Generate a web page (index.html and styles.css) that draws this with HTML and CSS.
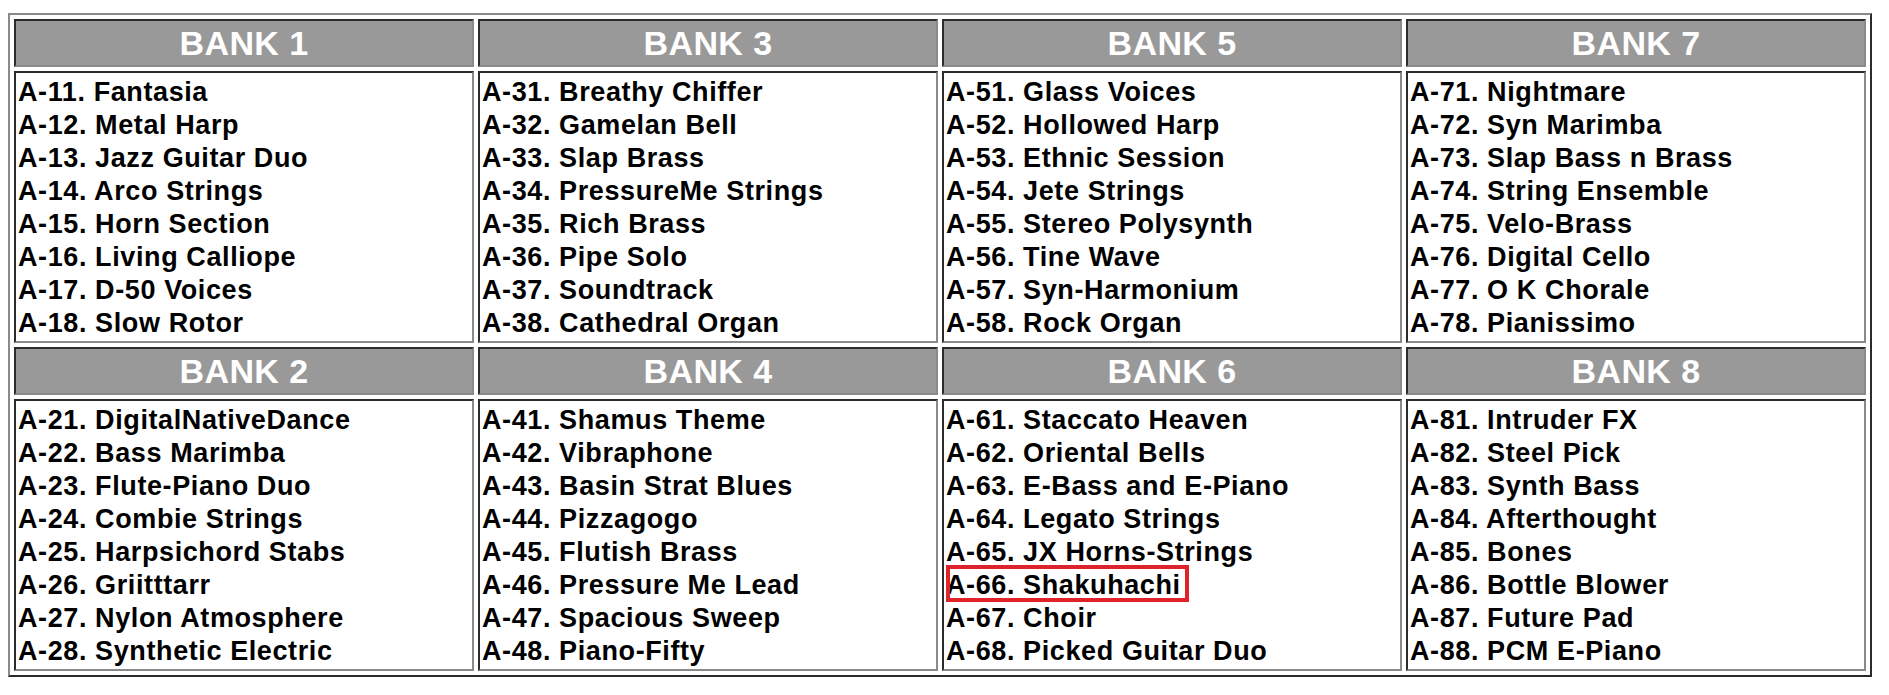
FILE: index.html
```html
<!DOCTYPE html>
<html>
<head>
<meta charset="utf-8">
<link rel="stylesheet" href="styles.css">
</head>
<body>
<table class="banks">
  <colgroup><col class="c"><col class="c"><col class="c"><col class="c"></colgroup>
  <tr class="head">
    <th>BANK 1</th><th>BANK 3</th><th>BANK 5</th><th>BANK 7</th>
  </tr>
  <tr class="list">
    <td>A-11. Fantasia<br>A-12. Metal Harp<br>A-13. Jazz Guitar Duo<br>A-14. Arco Strings<br>A-15. Horn Section<br>A-16. Living Calliope<br>A-17. D-50 Voices<br>A-18. Slow Rotor</td>
    <td>A-31. Breathy Chiffer<br>A-32. Gamelan Bell<br>A-33. Slap Brass<br>A-34. PressureMe Strings<br>A-35. Rich Brass<br>A-36. Pipe Solo<br>A-37. Soundtrack<br>A-38. Cathedral Organ</td>
    <td>A-51. Glass Voices<br>A-52. Hollowed Harp<br>A-53. Ethnic Session<br>A-54. Jete Strings<br>A-55. Stereo Polysynth<br>A-56. Tine Wave<br>A-57. Syn-Harmonium<br>A-58. Rock Organ</td>
    <td>A-71. Nightmare<br>A-72. Syn Marimba<br>A-73. Slap Bass n Brass<br>A-74. String Ensemble<br>A-75. Velo-Brass<br>A-76. Digital Cello<br>A-77. O K Chorale<br>A-78. Pianissimo</td>
  </tr>
  <tr class="head">
    <th>BANK 2</th><th>BANK 4</th><th>BANK 6</th><th>BANK 8</th>
  </tr>
  <tr class="list">
    <td>A-21. DigitalNativeDance<br>A-22. Bass Marimba<br>A-23. Flute-Piano Duo<br>A-24. Combie Strings<br>A-25. Harpsichord Stabs<br>A-26. Griitttarr<br>A-27. Nylon Atmosphere<br>A-28. Synthetic Electric</td>
    <td>A-41. Shamus Theme<br>A-42. Vibraphone<br>A-43. Basin Strat Blues<br>A-44. Pizzagogo<br>A-45. Flutish Brass<br>A-46. Pressure Me Lead<br>A-47. Spacious Sweep<br>A-48. Piano-Fifty</td>
    <td>A-61. Staccato Heaven<br>A-62. Oriental Bells<br>A-63. E-Bass and E-Piano<br>A-64. Legato Strings<br>A-65. JX Horns-Strings<br><span class="mark">A-66. Shakuhachi</span><br>A-67. Choir<br>A-68. Picked Guitar Duo</td>
    <td>A-81. Intruder FX<br>A-82. Steel Pick<br>A-83. Synth Bass<br>A-84. Afterthought<br>A-85. Bones<br>A-86. Bottle Blower<br>A-87. Future Pad<br>A-88. PCM E-Piano</td>
  </tr>
</table>
</body>
</html>
```

FILE: styles.css
```css
html, body {
  margin: 0;
  padding: 0;
  background: #ffffff;
}

body {
  padding: 13px 8px 8px 8px;
  font-family: "Liberation Sans", Arial, sans-serif;
}

.banks {
  width: 1864px;
  table-layout: fixed;
  border-collapse: separate;
  border-spacing: 4px;
  border-style: solid;
  border-width: 2px;
  border-color: #8a8a8a #2b2b2b #2b2b2b #8a8a8a;
}

.banks .c {
  width: 460px;
}

.banks th,
.banks td {
  border-style: solid;
  border-width: 2px;
  border-color: #2b2b2b #8a8a8a #8a8a8a #2b2b2b;
}

.head th {
  height: 44px;
  padding: 0;
  background: #999999;
  color: #ffffff;
  font-size: 34px;
  font-weight: bold;
  line-height: 44px;
  letter-spacing: 0.4px;
  text-align: center;
}

.list td {
  height: 264px;
  padding: 3px 2px 1px 2px;
  background: #ffffff;
  color: #000000;
  font-size: 27px;
  font-weight: bold;
  line-height: 33px;
  letter-spacing: 0.6px;
  text-align: left;
  vertical-align: top;
  white-space: nowrap;
}

.mark {
  position: relative;
  display: inline-block;
  line-height: 33px;
  vertical-align: top;
}

.mark::after {
  content: "";
  position: absolute;
  left: 0;
  right: -8px;
  top: -4px;
  bottom: 0;
  border: 4px solid #e0222b;
}
```
